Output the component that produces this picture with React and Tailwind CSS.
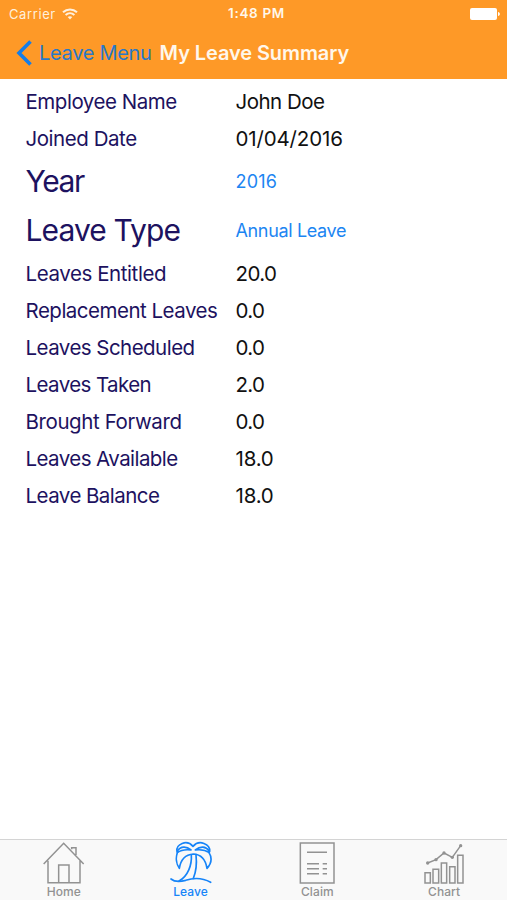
const details = [
  { label: 'Employee Name', value: 'John Doe', track: 'tracking-[-0.47px]', valueTrack: 'tracking-[-0.5px]' },
  { label: 'Joined Date', value: '01/04/2016', track: 'tracking-[-0.45px]', valueTrack: 'tracking-[-0.15px]' },
  { label: 'Year', value: '2016', picker: true, track: 'tracking-[-1.4px]', valueTrack: 'tracking-[0.2px]' },
  { label: 'Leave Type', value: 'Annual Leave', picker: true, track: 'tracking-[-0.9px]', valueTrack: 'tracking-[-0.35px]' },
  { label: 'Leaves Entitled', value: '20.0', track: 'tracking-[-0.42px]', valueTrack: 'tracking-[-0.6px]' },
  { label: 'Replacement Leaves', value: '0.0', track: 'tracking-[-0.5px]', valueTrack: 'tracking-[-0.7px]' },
  { label: 'Leaves Scheduled', value: '0.0', track: 'tracking-[-0.54px]', valueTrack: 'tracking-[-0.7px]' },
  { label: 'Leaves Taken', value: '2.0', track: 'tracking-[-0.6px]', valueTrack: 'tracking-[-0.7px]' },
  { label: 'Brought Forward', value: '0.0', track: 'tracking-[-0.4px]', valueTrack: 'tracking-[-0.7px]' },
  { label: 'Leaves Available', value: '18.0', track: 'tracking-[-0.57px]', valueTrack: 'tracking-[-0.2px]' },
  { label: 'Leave Balance', value: '18.0', track: 'tracking-[-0.55px]', valueTrack: 'tracking-[-0.2px]' },
];

function HomeIcon() {
  return (
    <svg viewBox="34 24 132 135" className="h-[45px] w-[44px]" fill="none" stroke="currentColor" strokeWidth="4.5">
      <path d="M42 96 102 34 162 96M55 86V152H151V86M87 152V99H118V152M126 52V47H139V69" />
    </svg>
  );
}

function PalmIcon() {
  return (
    <svg viewBox="36 24 132 135" className="h-[45px] w-[44px]" fill="none" stroke="currentColor" strokeWidth="5" strokeLinecap="round" strokeLinejoin="round">
      {/* upper fronds */}
      <path d="M63 58C59 37 92 21 111 43C130 21 163 37 161 58" />
      <path d="M64 57C74 42 91 42 105 54C90 52 76 53 64 62" />
      <path d="M160 57C149 42 133 42 118 54C133 52 147 53 160 62" />
      {/* hanging fronds */}
      <path d="M64 62C58 79 62 98 70 109C74 84 86 68 112 66C136 67 149 85 153 109C168 92 168 76 159 62" />
      {/* trunk and ground */}
      <path d="M106 69C108 98 96 133 69 147M120 69C123 96 119 122 112 139" />
      <path d="M45 141C57 151 74 149 89 145C113 137 139 137 164 151" />
    </svg>
  );
}

function ClaimIcon() {
  return (
    <svg viewBox="39 24 132 135" className="h-[45px] w-[44px]" fill="none" stroke="currentColor" strokeWidth="4.5">
      <rect x="55" y="33" width="101" height="120" />
      <path d="M75 61H135M75 95H111M75 110H111M75 125H111M122 95H135M122 110H135M122 125H135" />
    </svg>
  );
}

function ChartIcon() {
  return (
    <svg viewBox="35 24 132 135" className="h-[45px] w-[44px]" fill="none" stroke="currentColor" strokeWidth="4.5">
      <path d="M44 122H60V153H44ZM68 112H85V153H68ZM93 93H109V153H93ZM118 104H134V153H118ZM142 70H158V153H142Z" />
      <path d="M52 93 77 83 101 63 126 76 151 41" />
      <g fill="currentColor" stroke="none">
        <circle cx="52" cy="93" r="5" />
        <circle cx="77" cy="83" r="5" />
        <circle cx="101" cy="63" r="5" />
        <circle cx="126" cy="76" r="5" />
        <circle cx="151" cy="41" r="5" />
      </g>
    </svg>
  );
}

const tabs = [
  { name: 'Home', Icon: HomeIcon },
  { name: 'Leave', Icon: PalmIcon, active: true },
  { name: 'Claim', Icon: ClaimIcon },
  { name: 'Chart', Icon: ChartIcon },
];

function StatusBar() {
  return (
    <div className="grid h-[27px] grid-cols-3 items-center pl-[9px] pr-[7px] text-[13px] leading-none">
      <div className="flex items-center gap-[6px] pt-px text-[#fff0dc]">
        <span className="tracking-[0.6px]">Carrier</span>
        <svg viewBox="0 0 16 12" className="h-3 w-4" fill="none" stroke="currentColor" strokeWidth="2">
          <path d="M1 4.3C5 .5 11 .5 15 4.3M3.6 7C6.2 4.6 9.8 4.6 12.4 7" />
          <path d="M5.7 9.1C7 8 9 8 10.3 9.1L8 11.4Z" fill="currentColor" stroke="none" />
        </svg>
      </div>
      <span className="pl-[4px] pt-px text-center text-[13.5px] font-semibold tracking-[0.65px] text-[#fff7eb]">1:48 PM</span>
      <svg viewBox="0 0 30 12" className="h-3 w-[30px] justify-self-end" fill="white">
        <rect width="27" height="12" rx="2" />
        <path d="M28 4C30.5 4.5 30.5 7.5 28 8Z" />
      </svg>
    </div>
  );
}

export default function App() {
  return (
    <div className="flex h-[900px] w-[507px] flex-col bg-white font-['Inter','Liberation_Sans',sans-serif]">
      <header className="h-[79px] bg-[#fe9927]">
        <StatusBar />
        <div className="flex h-[52px] items-center pl-[16px] text-[20px] leading-none">
          <button className="flex items-center gap-[7px] text-[#2878c8]">
            <svg viewBox="0 0 16 26" className="h-[26px] w-4" fill="none" stroke="#147de8" strokeWidth="3.6">
              <path d="M14.5 1.5 3 13 14.5 24.5" />
            </svg>
            <span className="tracking-[-0.3px]">Leave Menu</span>
          </button>
          <h1 className="ml-[8px] font-semibold tracking-[-0.09px] text-[#fff7eb]">My Leave Summary</h1>
        </div>
      </header>

      <main className="flex-1 pl-[25.5px] pt-[5px]">
        {details.map(({ label, value, picker, track, valueTrack }) => (
          <div key={label} className={`flex items-center whitespace-nowrap leading-none ${picker ? 'h-[49px] pb-[2px]' : 'h-[37px]'}`}>
            <span className={`w-[210px] text-[#1d1260] ${track} ${picker ? 'pb-[2px] text-[30px]' : 'text-[20.5px]'}`}>{label}</span>
            <span className={`${valueTrack} ${picker ? 'text-[18px] text-[#1c85f2]' : 'text-[20.5px] text-[#111111]'}`}>{value}</span>
          </div>
        ))}
      </main>

      <nav className="grid h-[61px] grid-cols-4 border-t border-[#d4d4d4] bg-[#f9f9f9]">
        {tabs.map(({ name, Icon, active }) => (
          <button key={name} className={`flex flex-col items-center ${active ? 'text-[#1684f8]' : 'text-[#929292]'}`}>
            <Icon />
            <span className="mt-px pl-px text-[12px] font-medium leading-[12px] tracking-[0.1px]">{name}</span>
          </button>
        ))}
      </nav>
    </div>
  );
}
